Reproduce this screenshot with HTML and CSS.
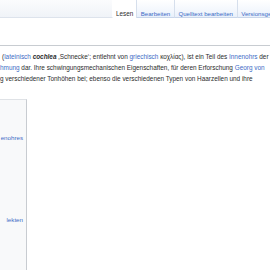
FILE: index.html
```html
<!DOCTYPE html>
<html>
<head>
	<meta charset="utf-8">
	<title>Cochlea</title>
	<link rel="stylesheet" href="styles.css">
</head>
<body>
	<div class="kopf">
		<div class="leer"></div>
		<ul class="reiter">
			<li class="aktiv">Lesen</li>
			<li><a href="#">Bearbeiten</a></li>
			<li><a href="#">Quelltext bearbeiten</a></li>
			<li><a href="#">Versionsgeschichte</a></li>
		</ul>
	</div>

	<div class="titel"></div>

	<div class="inhalt">
		<div class="zeile z1">(<a href="#">lateinisch</a> <i>cochlea</i> ‚Schnecke‘; entlehnt von <a href="#">griechisch</a> κοχλίας), ist ein Teil des <a href="#">Innenohrs</a> der</div>
		<div class="zeile z2"><a href="#">hmung</a> dar. Ihre schwingungsmechanischen Eigenschaften, für deren Erforschung <a href="#">Georg von</a></div>
		<div class="zeile z3">g verschiedener Tonhöhen bei; ebenso die verschiedenen Typen von Haarzellen und ihre</div>
	</div>

	<div class="kasten">
		<div class="eintrag e1"><a href="#">enohres</a></div>
		<div class="eintrag e2"><a href="#">lekten</a></div>
	</div>
</body>
</html>
```

FILE: styles.css
```css
body{
	margin: 0;
	width: 270px;
	height: 270px;
	overflow: hidden;
	background-color: white;
	font-family: "Liberation Sans", Arial, sans-serif;
	color: #2a2b2c;
}
a{
	color: #3d6cc6;
	text-decoration: none;
}
.kopf{
	display: flex;
	height: 18px;
}
.leer{
	width: 113px;
	flex-shrink: 0;
	background: linear-gradient(to bottom, #fbfcfd 0%, #f0f3f8 100%);
	border-bottom: 1px solid #dde3ec;
	border-right: 1px solid white;
	box-sizing: border-box;
}
.reiter{
	display: flex;
	list-style: none;
	margin: 0;
	padding: 0;
	white-space: nowrap;
	font-size: 6.1px;
	overflow: hidden;
}
.reiter li{
	padding: 10px 3.6px 0 3.6px;
	background: linear-gradient(to bottom, #ffffff 0%, #f3f7fd 60%, #e8f0fb 100%);
	border-right: 1px solid #d6dfec;
	border-bottom: 1px solid #c9d6ea;
	box-sizing: border-box;
	height: 18px;
}
.reiter li.aktiv{
	background: white;
	border-bottom: 0;
	color: #2a2b2c;
	font-size: 6.3px;
	padding-left: 3px;
	padding-right: 3px;
}
.titel{
	height: 27px;
	border-bottom: 1px solid #c8ccd1;
}
.inhalt{
	padding-top: 6px;
	font-size: 6.42px;
	line-height: 10.9px;
	white-space: nowrap;
	overflow: hidden;
}
.z1{
	padding-left: 2px;
}
.inhalt i{
	font-weight: bold;
}
.kasten{
	margin-top: 14px;
	width: 26px;
	height: 172px;
	background-color: #f8f9fa;
	border-top: 1px solid #dfe2e6;
	border-right: 1px solid #c8ccd1;
	font-size: 6.2px;
	white-space: nowrap;
	direction: rtl;
	overflow: hidden;
}
.eintrag{
	text-align: right;
	padding-right: 3px;
}
.e1{
	margin-top: 34px;
}
.e2{
	margin-top: 75px;
}
```
